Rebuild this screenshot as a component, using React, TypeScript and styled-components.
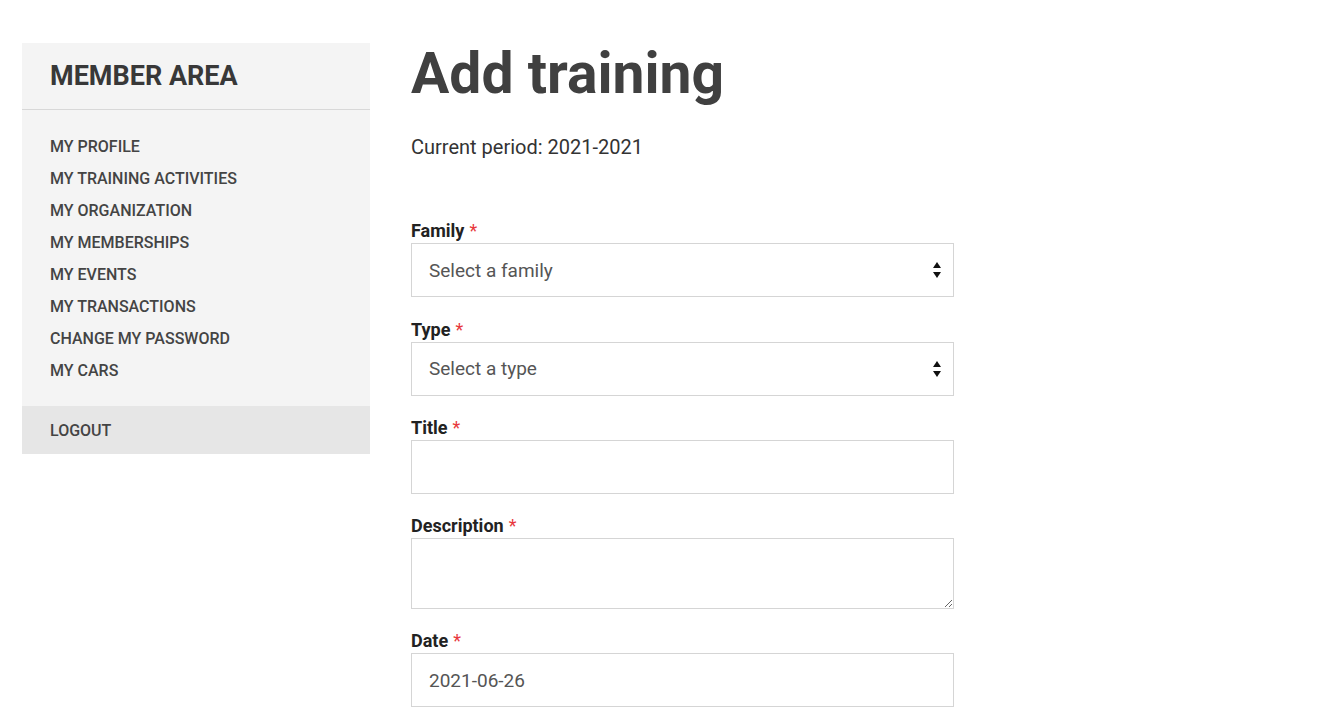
import React from "react";
import styled, { createGlobalStyle } from "styled-components";

const Global = createGlobalStyle`
  html, body { margin: 0; padding: 0; background: #fff; }
  body { font-family: Roboto, "Liberation Sans", Arial, sans-serif; color: #333; }
  * { box-sizing: border-box; }
`;

const Page = styled.div`
  display: flex;
  align-items: flex-start;
  gap: 41px;
  padding: 43px 0 0 22px;
`;

const Sidebar = styled.aside`
  width: 348px;
  flex: none;
  background: #f4f4f4;
`;

const SideHeader = styled.h2`
  margin: 0;
  height: 67px;
  padding: 0 28px;
  display: flex;
  align-items: center;
  font-size: 27px;
  font-weight: 700;
  color: #383838;
  border-bottom: 1px solid #d8d8d8;
`;

const Menu = styled.ul`
  list-style: none;
  margin: 0;
  padding: 21px 28px 19px;
`;

const MenuItem = styled.li`
  font-size: 16px;
  line-height: 32px;
  font-weight: 500;
  color: #444;
  text-transform: uppercase;
`;

const Logout = styled.div`
  background: #e6e6e6;
  height: 48px;
  padding: 1px 28px 0;
  display: flex;
  align-items: center;
  font-size: 16px;
  font-weight: 500;
  color: #444;
  text-transform: uppercase;
`;

const Main = styled.main`
  width: 543px;
  flex: none;
`;

const Title = styled.h1`
  margin: 2px 0 0;
  font-size: 57px;
  line-height: 1;
  font-weight: 700;
  color: #404040;
`;

const Period = styled.p`
  margin: 32px 0 59.4px;
  font-size: 20px;
  line-height: 27px;
  color: #333;
`;

const Field = styled.div`
  display: flex;
  flex-direction: column;
  margin-bottom: 21.3px;
`;

const Label = styled.label`
  display: block;
  font-size: 18px;
  line-height: 22px;
  font-weight: 700;
  color: #222;
  margin-bottom: 1px;
`;

const Req = styled.span`
  color: #e8383d;
  font-weight: 400;
  margin-left: 5px;
`;

const controlBase = `
  width: 100%;
  border: 1px solid #d5d5d5;
  border-radius: 0;
  background: #fff;
  font-family: Roboto, "Liberation Sans", Arial, sans-serif;
  font-size: 19px;
  color: #555;
  padding: 0 17px;
  outline: none;
`;

const Input = styled.input`
  ${controlBase}
  height: 54px;
`;

const SelectWrap = styled.div`
  position: relative;
`;

const Select = styled.select`
  ${controlBase}
  height: 54px;
  appearance: none;
  -webkit-appearance: none;
`;

const Arrows = styled.svg`
  position: absolute;
  right: 13px;
  top: 19px;
  pointer-events: none;
`;

const TextArea = styled.textarea`
  ${controlBase}
  height: 70.5px;
  padding: 12px 17px;
  resize: vertical;
  display: block;
`;

function SelectField({ label, placeholder }: { label: string; placeholder: string }) {
  return (
    <Field>
      <Label>
        {label}
        <Req>*</Req>
      </Label>
      <SelectWrap>
        <Select defaultValue="">
          <option value="">{placeholder}</option>
        </Select>
        <Arrows width="8" height="16" viewBox="0 0 8 16">
          <path d="M4 0 L8 6 L0 6 Z" fill="#111" />
          <path d="M0 10 L8 10 L4 16 Z" fill="#111" />
        </Arrows>
      </SelectWrap>
    </Field>
  );
}

const menu = [
  "My profile",
  "My training activities",
  "My organization",
  "My memberships",
  "My events",
  "My transactions",
  "Change my password",
  "My cars",
];

export default function App() {
  return (
    <>
      <Global />
      <Page>
        <Sidebar>
          <SideHeader>MEMBER AREA</SideHeader>
          <Menu>
            {menu.map((m) => (
              <MenuItem key={m}>{m}</MenuItem>
            ))}
          </Menu>
          <Logout>Logout</Logout>
        </Sidebar>
        <Main>
          <Title>Add training</Title>
          <Period>Current period: 2021-2021</Period>
          <SelectField label="Family" placeholder="Select a family" />
          <SelectField label="Type" placeholder="Select a type" />
          <Field>
            <Label>
              Title<Req>*</Req>
            </Label>
            <Input type="text" />
          </Field>
          <Field>
            <Label>
              Description<Req>*</Req>
            </Label>
            <TextArea />
          </Field>
          <Field>
            <Label>
              Date<Req>*</Req>
            </Label>
            <Input type="text" defaultValue="2021-06-26" />
          </Field>
        </Main>
      </Page>
    </>
  );
}
